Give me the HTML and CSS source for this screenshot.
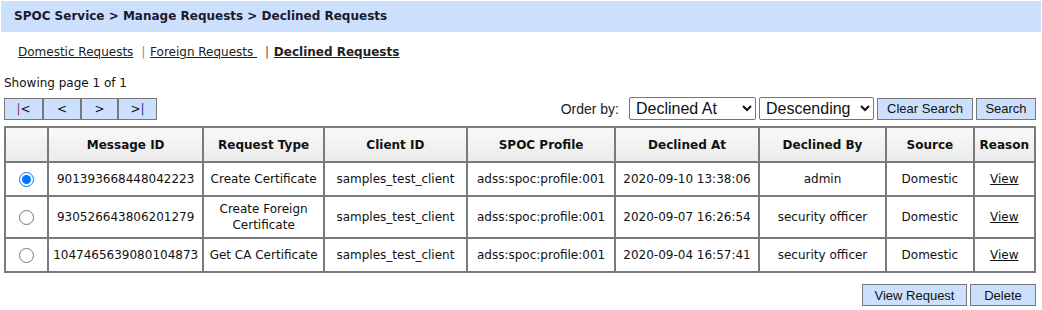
FILE: index.html
```html
<!DOCTYPE html>
<html lang="en">
<head>
  <meta charset="UTF-8" />
  <title>Declined Requests</title>
  <link rel="stylesheet" href="styles.css">
</head>
<body>
  <div class="page">
    <div class="title-bar">SPOC Service &gt; Manage Requests &gt; Declined Requests</div>

    <div class="content">
      <!-- tabs -->
      <div class="tabs">
        <a href="#" class="tab">Domestic Requests</a>
        <span class="sep sep-blue">|</span>
        <a href="#" class="tab">Foreign Requests&nbsp;</a>
        <span class="sep sep-red">|</span>
        <a href="#" class="tab active">Declined Requests</a>
      </div>

      <div class="paging-info">Showing page 1 of 1</div>

      <!-- toolbar: pager + ordering -->
      <div class="toolbar">
        <div class="pager">
          <button class="pg-btn pg-first"><span class="bar-red">|</span>&lt;</button>
          <button class="pg-btn pg-prev">&lt;</button>
          <button class="pg-btn pg-next">&gt;</button>
          <button class="pg-btn pg-last">&gt;<span class="bar-blue">|</span></button>
        </div>
        <div class="order">
          <label class="order-label">Order by:</label>
          <select class="sel sel-field">
            <option>Declined At</option>
          </select>
          <select class="sel sel-dir">
            <option>Descending</option>
          </select>
          <button class="btn btn-clear">Clear Search</button>
          <button class="btn btn-search">Search</button>
        </div>
      </div>

      <table class="grid">
        <thead>
          <tr>
            <th class="c-sel"></th>
            <th class="c-id">Message ID</th>
            <th class="c-type">Request Type</th>
            <th class="c-client">Client ID</th>
            <th class="c-prof">SPOC Profile</th>
            <th class="c-at">Declined At</th>
            <th class="c-by">Declined By</th>
            <th class="c-src">Source</th>
            <th class="c-reason">Reason</th>
          </tr>
        </thead>
        <tbody>
          <tr>
            <td><input type="radio" name="req" checked></td>
            <td>901393668448042223</td>
            <td>Create Certificate</td>
            <td>samples_test_client</td>
            <td>adss:spoc:profile:001</td>
            <td>2020-09-10 13:38:06</td>
            <td>admin</td>
            <td>Domestic</td>
            <td><a href="#" class="view">View</a></td>
          </tr>
          <tr>
            <td><input type="radio" name="req"></td>
            <td>930526643806201279</td>
            <td>Create Foreign<br>Certificate</td>
            <td>samples_test_client</td>
            <td>adss:spoc:profile:001</td>
            <td>2020-09-07 16:26:54</td>
            <td>security officer</td>
            <td>Domestic</td>
            <td><a href="#" class="view">View</a></td>
          </tr>
          <tr>
            <td><input type="radio" name="req"></td>
            <td>1047465639080104873</td>
            <td>Get CA Certificate</td>
            <td>samples_test_client</td>
            <td>adss:spoc:profile:001</td>
            <td>2020-09-04 16:57:41</td>
            <td>security officer</td>
            <td>Domestic</td>
            <td><a href="#" class="view">View</a></td>
          </tr>
        </tbody>
      </table>

      <div class="actions">
        <button class="btn btn-view">View Request</button>
        <button class="btn btn-del">Delete</button>
      </div>
    </div>
  </div>
</body>
</html>
```

FILE: styles.css
```css
body { margin: 0; font-family: "DejaVu Sans", Verdana, sans-serif; font-size: 12px; color: #111; }
.page { padding: 1px; }

.title-bar {
  background: #cce0fd;
  height: 31px;
  line-height: 31px;
  padding-left: 13px;
  font-weight: bold;
  color: #1a1a2e;
}

.content { padding: 0 5px 0 3px; }

.tabs { padding: 10px 0 0 14px; height: 20px; line-height: 20px; }
.tab { color: #222; text-decoration: underline; }
.tab.active { font-weight: bold; }
.sep { margin: 0 1px 0 4px; }
.sep-blue { color: #7e8ea8; }
.sep-red { color: #8a2a3a; }

.paging-info { margin-top: 13px; line-height: 16px; }

.toolbar {
  display: flex;
  justify-content: space-between;
  align-items: center;
  margin-top: 6px;
  height: 23px;
}
.pager { display: flex; }
.pg-btn {
  height: 22px;
  background: #cce0fd;
  border: 1px solid #787878;
  font-family: "DejaVu Sans", Verdana, sans-serif;
  font-size: 12px;
  color: #111;
  padding: 0;
}
.pg-first { width: 39px; }
.pg-prev { width: 38px; }
.pg-next { width: 37px; }
.pg-last { width: 39px; }
.bar-red { color: #9b2a4a; }
.bar-blue { color: #3a2a8a; }

.order { display: flex; align-items: center; gap: 3px; }
.order-label {
  font-family: "Liberation Sans", Arial, sans-serif;
  font-size: 14px;
  color: #222;
  margin-right: 7px;
}
.sel {
  height: 23px;
  font-family: "Liberation Sans", Arial, sans-serif;
  font-size: 16px;
  color: #111;
  border: 1px solid #767676;
  border-radius: 2px;
  background: #fff;
  padding: 0 2px;
}
.sel-field { width: 127px; }
.sel-dir { width: 115px; }

.btn {
  height: 22px;
  background: #cce0fd;
  border: 1px solid #787878;
  font-family: "Liberation Sans", Arial, sans-serif;
  font-size: 13px;
  color: #111;
  padding: 0 6px;
}
.btn-clear { width: 96px; }
.btn-search { width: 60px; }

.grid {
  width: 1032px;
  margin-top: 6px;
  border-collapse: collapse;
  border: 2px solid #7a7a7a;
}
.grid th, .grid td {
  border: 2px solid #7a7a7a;
  text-align: center;
  padding: 4px 3px;
  line-height: 16px;
}
.grid th {
  height: 25px;
  font-weight: bold;
  background: linear-gradient(#f9f9f9, #ebebeb);
}
.grid td { height: 24px; white-space: nowrap; }
.grid input[type=radio] { margin: 0; width: 15px; height: 15px; vertical-align: middle; }
.view { color: #111; text-decoration: underline; }

.c-sel { width: 38px; }
.c-id { width: 148px; }
.c-type { width: 113px; }
.c-client { width: 138px; }
.c-prof { width: 142px; }
.c-at { width: 137px; }
.c-by { width: 124px; }
.c-src { width: 83px; }
.c-reason { width: 54px; }

.actions { display: flex; justify-content: flex-end; gap: 3px; margin-top: 11px; }
.btn-view { width: 105px; }
.btn-del { width: 66px; }
```
